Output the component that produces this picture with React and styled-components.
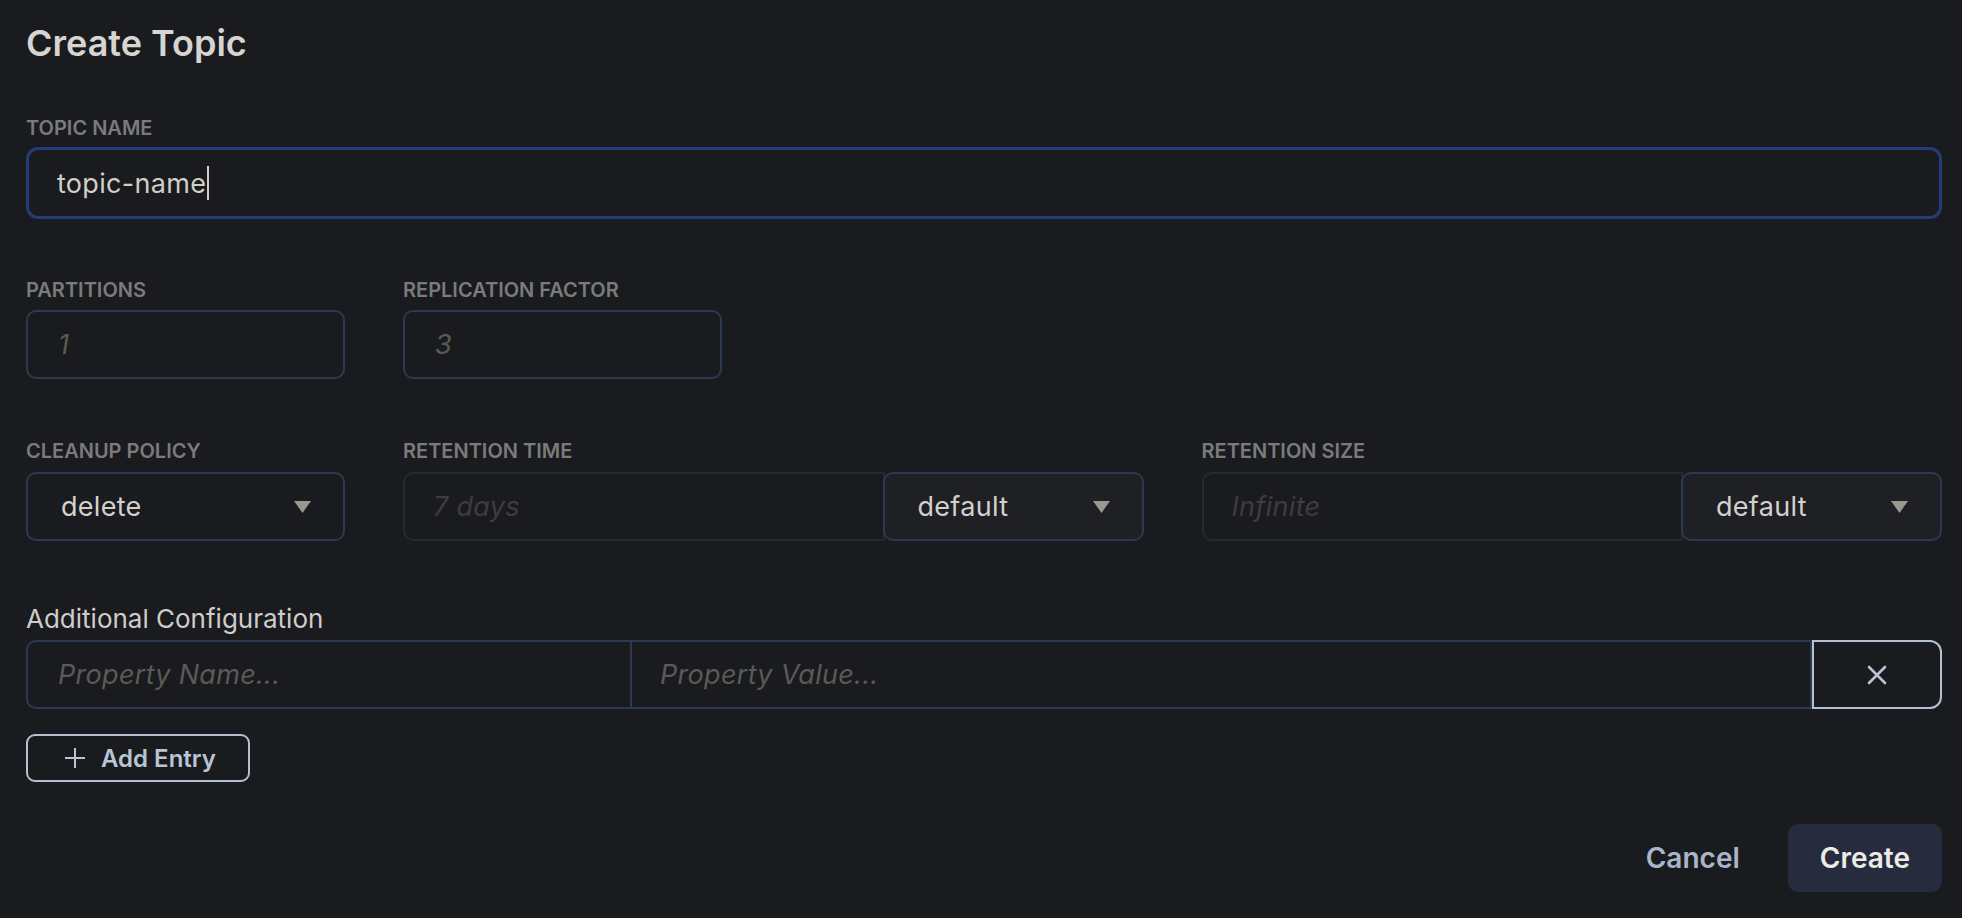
import React from 'react';
import styled, { createGlobalStyle } from 'styled-components';

const GlobalStyle = createGlobalStyle`
  html, body {
    margin: 0;
    background: #1a1b1e;
  }
  body {
    font-family: Inter, "Noto Sans", sans-serif;
  }
  * {
    box-sizing: border-box;
  }
`;

const Caret = () => (
  <svg width="17" height="12" viewBox="0 0 17 12" aria-hidden="true">
    <polygon points="0,0 17,0 8.5,12" fill="#9b968e" />
  </svg>
);

const CloseIcon = () => (
  <svg width="20" height="20" viewBox="0 0 20 20" aria-hidden="true">
    <path d="M2 2 L18 18 M18 2 L2 18" stroke="#b9c4d4" strokeWidth="2.6" strokeLinecap="round" />
  </svg>
);

const PlusIcon = () => (
  <svg width="22" height="22" viewBox="0 0 22 22" aria-hidden="true">
    <path d="M11 1 V21 M1 11 H21" stroke="#b9c4d4" strokeWidth="2" />
  </svg>
);

const Select = ({ value, raised, width }) => (
  <SelectBox $raised={raised} $width={width}>
    <span>{value}</span>
    <Caret />
  </SelectBox>
);

const App = () => (
  <Page>
    <GlobalStyle />
    <Title>Create Topic</Title>

    <Field $top={53} $gap={8}>
      <Label>Topic Name</Label>
      <FocusedBox>
        topic-name
        <TextCursor />
      </FocusedBox>
    </Field>

    <Row $top={60}>
      <Field $gap={9}>
        <Label>Partitions</Label>
        <Input placeholder="1" $width={319} />
      </Field>
      <Field $gap={9}>
        <Label>Replication Factor</Label>
        <Input placeholder="3" $width={319} />
      </Field>
    </Row>

    <Columns $top={61}>
      <Field $gap={10}>
        <Label>Cleanup Policy</Label>
        <Select value="delete" />
      </Field>
      <Field $gap={10}>
        <Label>Retention Time</Label>
        <Combo>
          <ComboInput placeholder="7 days" disabled />
          <Select value="default" raised width={261} />
        </Combo>
      </Field>
      <Field $gap={10}>
        <Label>Retention Size</Label>
        <Combo>
          <ComboInput placeholder="Infinite" disabled />
          <Select value="default" raised width={261} />
        </Combo>
      </Field>
    </Columns>

    <Field $top={63} $gap={6}>
      <SectionTitle>Additional Configuration</SectionTitle>
      <PropRow>
        <NameInput placeholder="Property Name..." />
        <ValueInput placeholder="Property Value..." />
        <RemoveButton type="button" aria-label="Remove entry">
          <CloseIcon />
        </RemoveButton>
      </PropRow>
    </Field>

    <AddButton type="button">
      <PlusIcon />
      Add Entry
    </AddButton>

    <Footer>
      <GhostButton type="button">Cancel</GhostButton>
      <PrimaryButton type="button">Create</PrimaryButton>
    </Footer>
  </Page>
);

const Page = styled.div`
  min-height: 100vh;
  padding: 22px 20px 0 26px;
  display: flex;
  flex-direction: column;
  color: #d3d1cd;
`;

const Title = styled.h1`
  margin: 0;
  font-size: 36px;
  line-height: 42px;
  font-weight: 600;
  color: #d7d5d1;
`;

const Field = styled.div`
  display: flex;
  flex-direction: column;
  gap: ${(p) => p.$gap || 8}px;
  margin-top: ${(p) => p.$top || 0}px;
  min-width: 0;
`;

const Label = styled.label`
  font-size: 20px;
  line-height: 22px;
  font-weight: 600;
  text-transform: uppercase;
  color: #7b7b7b;
`;

const SectionTitle = styled.div`
  font-size: 26px;
  line-height: 30px;
  font-weight: 400;
  color: #cfcdc9;
`;

const FocusedBox = styled.div`
  height: 72px;
  display: flex;
  align-items: center;
  padding: 0 28px;
  border: 3px solid #243d7a;
  border-radius: 12px;
  font-size: 27px;
  letter-spacing: 0.3px;
  color: #d0cec9;
`;

const TextCursor = styled.span`
  width: 2px;
  height: 34px;
  margin-left: 1px;
  background: #d0cec9;
`;

const Row = styled.div`
  display: flex;
  gap: 58px;
  margin-top: ${(p) => p.$top}px;
`;

const Columns = styled.div`
  display: grid;
  grid-template-columns: 319px 1fr 1fr;
  column-gap: 58px;
  margin-top: ${(p) => p.$top}px;
`;

const inputBase = `
  height: 69px;
  background: transparent;
  font-family: Inter, "Noto Sans", sans-serif;
  font-size: 27px;
  letter-spacing: 0.3px;
  color: #d0cec9;
  outline: none;
  &::placeholder {
    font-style: italic;
    color: #5b5a57;
  }
`;

const Input = styled.input`
  ${inputBase}
  width: ${(p) => p.$width}px;
  padding: 0 30px;
  border: 2px solid #2c3a51;
  border-radius: 10px;
`;

const SelectBox = styled.div`
  height: 69px;
  ${(p) => (p.$width ? `width: ${p.$width}px; flex: none;` : '')}
  display: flex;
  align-items: center;
  justify-content: space-between;
  padding: 0 32px 0 33px;
  border: 2px solid #2c3a51;
  border-radius: 10px;
  background: ${(p) => (p.$raised ? '#1f2024' : 'transparent')};
  font-size: 27px;
  letter-spacing: 0.3px;
  color: #d3d1cd;
`;

const Combo = styled.div`
  display: flex;
`;

const ComboInput = styled.input`
  ${inputBase}
  flex: 1;
  min-width: 0;
  margin-right: -2px;
  padding: 0 28px;
  border: 2px solid #222a36;
  border-radius: 10px 0 0 10px;
  &::placeholder {
    font-style: italic;
    color: #3d3d3c;
  }
`;

const PropRow = styled.div`
  display: flex;
  height: 69px;
`;

const NameInput = styled.input`
  ${inputBase}
  width: 606px;
  padding: 0 30px;
  border: 2px solid #2c3a51;
  border-radius: 10px 0 0 10px;
`;

const ValueInput = styled.input`
  ${inputBase}
  flex: 1;
  min-width: 0;
  padding: 0 28px;
  border: 2px solid #2c3a51;
  border-left: none;
`;

const RemoveButton = styled.button`
  width: 130px;
  height: 69px;
  display: flex;
  align-items: center;
  justify-content: center;
  background: transparent;
  border: 2px solid #b5c1d1;
  border-radius: 0 12px 12px 0;
  cursor: pointer;
`;

const AddButton = styled.button`
  align-self: flex-start;
  margin-top: 25px;
  height: 48px;
  display: inline-flex;
  align-items: center;
  gap: 15px;
  padding: 0 32px 0 36px;
  background: transparent;
  border: 2px solid #b5c1d1;
  border-radius: 9px;
  font-family: Inter, "Noto Sans", sans-serif;
  font-size: 24px;
  font-weight: 600;
  color: #b9c4d4;
  cursor: pointer;
`;

const Footer = styled.div`
  display: flex;
  justify-content: flex-end;
  gap: 16px;
  margin-top: 42px;
`;

const BaseButton = styled.button`
  height: 68px;
  padding: 0 32px;
  border: none;
  border-radius: 10px;
  font-family: Inter, "Noto Sans", sans-serif;
  font-size: 28px;
  font-weight: 600;
  cursor: pointer;
`;

const GhostButton = styled(BaseButton)`
  background: transparent;
  color: #aab6c8;
`;

const PrimaryButton = styled(BaseButton)`
  background: #262c3e;
  color: #ecebe8;
`;

export default App;
